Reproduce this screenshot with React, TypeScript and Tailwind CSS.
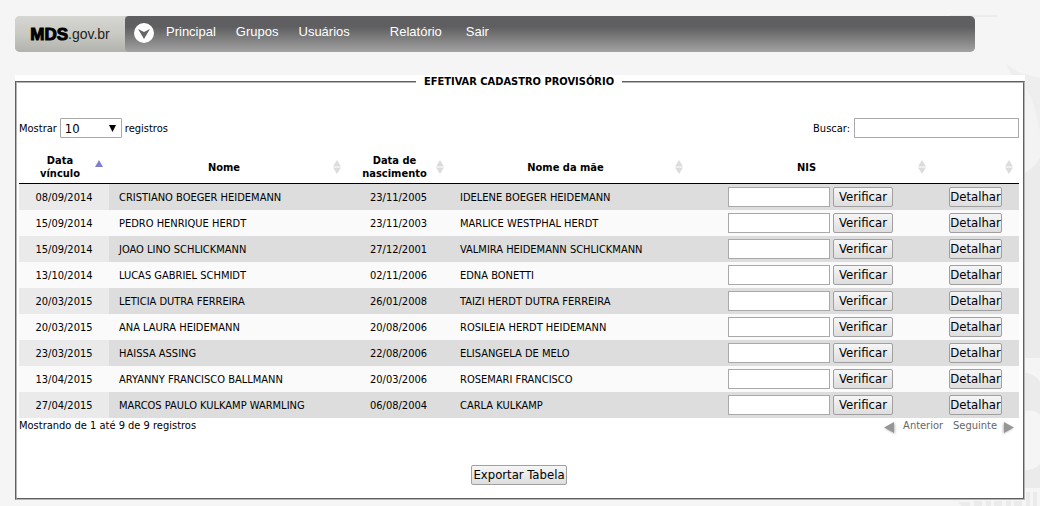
import type { InputHTMLAttributes, ReactNode } from "react";
import { clsx } from "clsx";

const menuItems = [
    { label: "Principal", className: "mr-5" },
    { label: "Grupos", className: "mr-5" },
    { label: "Usuários", className: "mr-10" },
    { label: "Relatório", className: "mr-6" },
    { label: "Sair", className: "" },
];

const columns = [
    { label: "Data vínculo", width: "w-[9%]", sorted: true },
    { label: "Nome", width: "w-[23.8%]" },
    { label: "Data de nascimento", width: "w-[10.3%]" },
    { label: "Nome da mãe", width: "w-[23.9%]" },
    { label: "NIS", width: "w-[24.3%]" },
    { label: "", width: "w-[8.7%]" },
];

const records = [
    { linked: "08/09/2014", name: "CRISTIANO BOEGER HEIDEMANN", born: "23/11/2005", mother: "IDELENE BOEGER HEIDEMANN" },
    { linked: "15/09/2014", name: "PEDRO HENRIQUE HERDT", born: "23/11/2003", mother: "MARLICE WESTPHAL HERDT" },
    { linked: "15/09/2014", name: "JOAO LINO SCHLICKMANN", born: "27/12/2001", mother: "VALMIRA HEIDEMANN SCHLICKMANN" },
    { linked: "13/10/2014", name: "LUCAS GABRIEL SCHMIDT", born: "02/11/2006", mother: "EDNA BONETTI" },
    { linked: "20/03/2015", name: "LETICIA DUTRA FERREIRA", born: "26/01/2008", mother: "TAIZI HERDT DUTRA FERREIRA" },
    { linked: "20/03/2015", name: "ANA LAURA HEIDEMANN", born: "20/08/2006", mother: "ROSILEIA HERDT HEIDEMANN" },
    { linked: "23/03/2015", name: "HAISSA ASSING", born: "22/08/2006", mother: "ELISANGELA DE MELO" },
    { linked: "13/04/2015", name: "ARYANNY FRANCISCO BALLMANN", born: "20/03/2006", mother: "ROSEMARI FRANCISCO" },
    { linked: "27/04/2015", name: "MARCOS PAULO KULKAMP WARMLING", born: "06/08/2004", mother: "CARLA KULKAMP" },
];

export default function App() {
    return (
        <div className="relative min-h-screen overflow-hidden bg-[#f5f5f5] font-['DejaVu_Sans_Condensed','DejaVu_Sans',sans-serif] text-[11px] leading-[13px] text-black">
            <Watermark />
            <div className="relative px-[15px] pt-4 pb-[6px]">
                <Navigation />
                <main className="mt-[23px] bg-white">
                    <fieldset className="min-w-0 border-2 border-[#b4b4b4] bg-white pr-1 pb-[13px] pl-[2px] [border-style:groove]">
                        <legend className="mx-auto bg-white px-2 leading-[14px] font-bold">
                            EFETIVAR CADASTRO PROVISÓRIO
                        </legend>
                        <Toolbar />
                        <RecordsTable />
                        <TableFooter />
                        <div className="mt-[30px] text-center">
                            <FormButton className="px-px">Exportar Tabela</FormButton>
                        </div>
                    </fieldset>
                </main>
            </div>
        </div>
    );
}

function Navigation() {
    return (
        <header className="mr-[50px] flex h-9 overflow-hidden rounded-[5px] bg-linear-to-b from-[#c9c9c4] to-[#b3b3ae]">
            <a
                href="#"
                className="flex w-[110px] shrink-0 items-center justify-center bg-linear-to-b from-[#d6d6d2] via-[#c9c9c4] to-[#b3b3ae] font-['Liberation_Sans',sans-serif] text-[14px] text-[#222]">
                <span className="text-[17px] font-bold text-black [-webkit-text-stroke:1px_black]">MDS</span>.gov.br
            </a>
            <nav className="flex flex-1 rounded-l-[4px] bg-linear-to-b from-[#5f5f61] from-30% to-[#a3a3a3] pl-[9px] font-['Liberation_Sans',sans-serif] text-[13px] leading-[15px] text-white">
                <svg className="mt-[7px] mr-3 size-5 shrink-0" viewBox="0 0 20 20" aria-hidden="true">
                    <circle cx="10" cy="10" r="10" fill="#fff" />
                    <path d="M4 6l6 3 6-3-6 10z" fill="#666" />
                </svg>
                <ul className="mt-2 flex">
                    {menuItems.map(item => (
                        <li key={item.label} className={item.className}>
                            <a href="#">{item.label}</a>
                        </li>
                    ))}
                </ul>
            </nav>
        </header>
    );
}

function Toolbar() {
    return (
        <div className="mt-[29px] flex items-center justify-between">
            <div className="flex items-center gap-[3px]">
                <label htmlFor="page-size">Mostrar</label>
                <div className="grid items-center">
                    <select
                        id="page-size"
                        className="col-start-1 row-start-1 h-5 w-[62px] appearance-none rounded-[1px] border border-[#a9a9a9] bg-white pl-1 text-[13px]">
                        <option>10</option>
                        <option>25</option>
                        <option>50</option>
                        <option>100</option>
                    </select>
                    <svg className="pointer-events-none col-start-1 row-start-1 mr-[6px] h-[7px] w-[7px] justify-self-end" viewBox="0 0 7 7" aria-hidden="true">
                        <path d="M0 0h7L3.5 7z" />
                    </svg>
                </div>
                <span>registros</span>
            </div>
            <div className="flex items-center gap-1">
                <label htmlFor="search">Buscar:</label>
                <TextBox id="search" type="search" className="w-[165px]" />
            </div>
        </div>
    );
}

function RecordsTable() {
    return (
        <table className="mt-3 w-full table-fixed border-separate border-spacing-0">
            <thead>
                <tr>
                    {columns.map((column, i) => (
                        <th
                            key={i}
                            scope="col"
                            className={clsx("border-b border-black pt-1 pr-[6px] pb-[3px] pl-[10px] font-bold", column.width)}>
                            <div className="flex items-center gap-1">
                                <span className="flex-1">{column.label}</span>
                                <SortIcon sorted={column.sorted} />
                            </div>
                        </th>
                    ))}
                </tr>
            </thead>
            <tbody>
                {records.map((record, i) => (
                    <tr key={record.name} className="odd:bg-[#dddddd] even:bg-[#fafafa]">
                        <td className={clsx("text-center", i % 2 === 0 && "bg-[#eaeaea]")}>{record.linked}</td>
                        <td className="px-[10px]">{record.name}</td>
                        <td className="text-center">{record.born}</td>
                        <td className="px-[10px]">{record.mother}</td>
                        <td className="py-[3px]">
                            <div className="flex justify-center gap-[3px]">
                                <TextBox aria-label={`NIS de ${record.name}`} className="w-[102px]" />
                                <FormButton className="w-[60px]">Verificar</FormButton>
                            </div>
                        </td>
                        <td className="py-[3px]">
                            <div className="flex justify-center">
                                <FormButton className="w-[53px]">Detalhar</FormButton>
                            </div>
                        </td>
                    </tr>
                ))}
            </tbody>
        </table>
    );
}

function TableFooter() {
    return (
        <div className="flex items-start justify-between leading-[15px]">
            <p>Mostrando de 1 até 9 de 9 registros</p>
            <div className="flex gap-[10px] pr-1 text-[#666]">
                <button type="button" className="flex gap-2">
                    <PageArrow />
                    Anterior
                </button>
                <button type="button" className="flex gap-[6px]">
                    Seguinte
                    <PageArrow className="-scale-x-100" />
                </button>
            </div>
        </div>
    );
}

function TextBox({ className, type = "text", ...props }: InputHTMLAttributes<HTMLInputElement>) {
    return (
        <input
            type={type}
            className={clsx("h-5 border border-[#a9a9a9] bg-white px-px text-[13px]", className)}
            {...props}
        />
    );
}

function FormButton(props: {
    className?: string,
    children: ReactNode,
}) {
    return (
        <button
            type="button"
            className={clsx(
                "h-5 rounded-[2px] border border-[#a0a0a0] bg-linear-to-b from-[#f6f6f6] to-[#dedede] text-[13px] leading-[18px] whitespace-nowrap",
                props.className)}>
            {props.children}
        </button>
    );
}

function SortIcon(props: {
    sorted?: boolean,
}) {
    return (
        <svg className="h-[14px] w-2 shrink-0" viewBox="0 0 8 14" aria-hidden="true">
            {props.sorted
                ? <path d="M4 0l4 7H0z" fill="#8080d0" />
                : <path d="M4 0l4 6.5H0zM0 7.5h8L4 14z" fill="#dcdcdc" />}
        </svg>
    );
}

function PageArrow(props: {
    className?: string,
}) {
    return (
        <svg className={clsx("mt-[3px] h-[14px] w-3 drop-shadow-[1px_1px_1px_#bbb]", props.className)} viewBox="0 0 12 14" aria-hidden="true">
            <path d="M11 1v11L1 6.5z" fill="#969696" />
        </svg>
    );
}

function Watermark() {
    return (
        <svg className="absolute top-0 right-0 h-[506px] w-[90px]" viewBox="0 0 90 506" aria-hidden="true">
            <path d="M0 16h47" stroke="#e2e2e2" />
            <path d="M56 64l12 8 22 6v82q-8 12-15 13V100z" fill="#eeeeee" />
            <path d="M70 82q10 8 14 24t6 26v28q-8 12-15 14h-5z" fill="#f3f3f3" />
            <path d="M70 174q12-2 20-16v200H70z" fill="#ebebeb" />
            <path d="M70 372q14 0 20 10v32q-8-6-20-2z" fill="#ebebeb" />
            <path d="M70 470q12 2 20-6v24H70z" fill="#ebebeb" />
            <path d="M8 502h12v4h-8zM24 501h8v5h-8zM36 501h5v5h-5zM44 501h8v5h-8zM56 501h5v5h-5zM64 501h8v5h-8zM76 492h4v14h-4zM83 492h4v14h-4z" fill="#ebebeb" />
        </svg>
    );
}
